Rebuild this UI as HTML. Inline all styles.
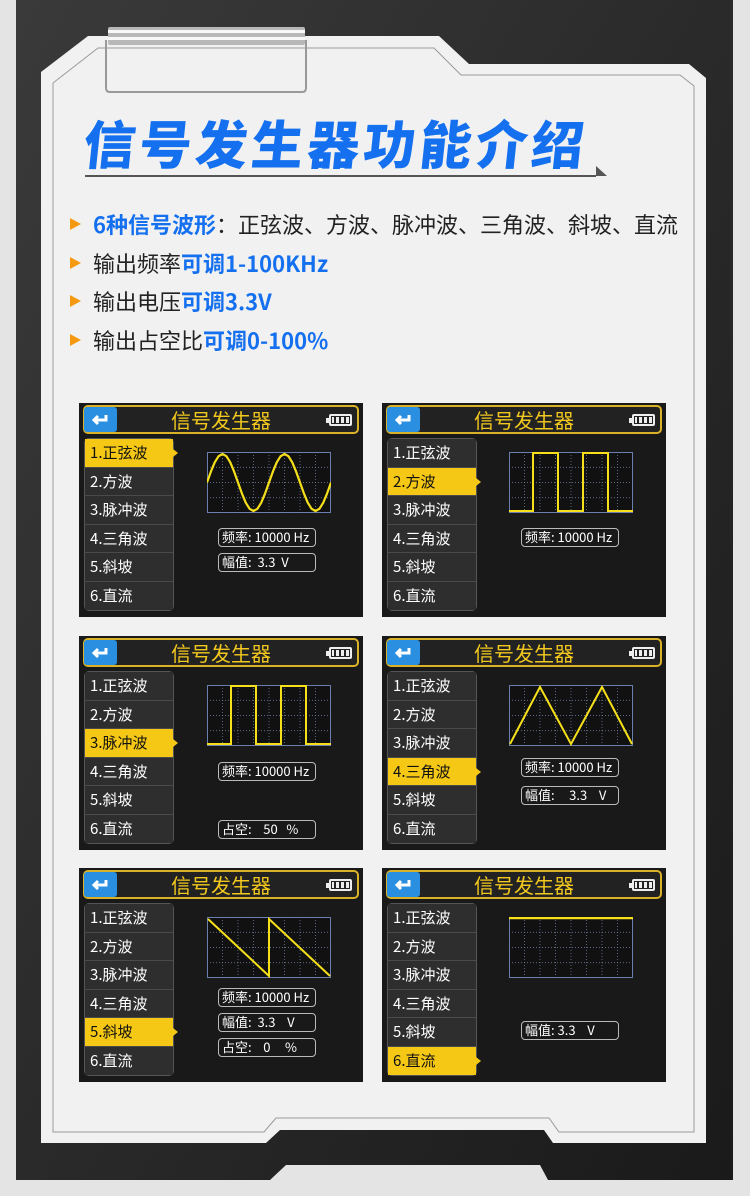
<!DOCTYPE html>
<html><head><meta charset="utf-8">
<style>
*{margin:0;padding:0;box-sizing:border-box}
body{width:750px;height:1196px;background:#e4e4e4;position:relative;overflow:hidden;font-family:"Liberation Sans","Noto Sans CJK SC",sans-serif}
.abs{position:absolute}
.panel{position:absolute;width:284px;height:214px;background:#191919;overflow:hidden}
.hdr{position:absolute;left:4px;top:2px;width:276px;height:29px;border:2px solid #d9b227;border-radius:5px;background:#222}
.back{position:absolute;left:5px;top:4px;width:33px;height:25px;background:#2a8fe0;border-radius:3px}
.ttl{position:absolute;left:0;right:0;top:2px;height:29px;text-align:center;color:#f2c81e;font-size:20px;line-height:29px;font-family:"Noto Sans CJK SC",sans-serif}
.bat{position:absolute;right:11px;top:11px;width:23px;height:12px;border:2px solid #eee;border-radius:2px;background:repeating-linear-gradient(90deg,#eee 0 3px,#222 3px 5px);background-clip:content-box;padding:1px}
.bat:after{content:"";position:absolute;left:-5px;top:2px;width:3px;height:5px;background:#eee}
.menu{position:absolute;left:5px;top:35px;width:90px;height:173px;border:1px solid #555;border-radius:5px;overflow:visible}
.it{height:28.5px;background:#2e2e2e;border-bottom:1px solid #4a4a4a;color:#fff;font-size:15px;line-height:28px;padding-left:5px;font-family:"Noto Sans CJK SC",sans-serif}
.it.s{background:#f5c816;color:#111;position:relative}
.it.s:after{content:"";position:absolute;right:-5px;top:10px;border-left:5px solid #f5c816;border-top:4px solid transparent;border-bottom:4px solid transparent}
.gr{position:absolute;left:128px;top:49px;width:124px;height:61px}
.box{position:absolute;left:139px;width:98px;height:19px;border:1.5px solid #bbb;border-radius:4px;color:#fff;font-size:13px;line-height:16px;padding-left:3px;white-space:pre;font-family:"Noto Sans CJK SC",sans-serif}
.bl{position:absolute;left:70px;font-size:22px;color:#222;white-space:nowrap;font-family:"Noto Sans CJK SC",sans-serif;line-height:30px}
.bl b{font-weight:bold;color:#1570f0}
.tri{display:inline-block;width:0;height:0;border-left:11px solid #f59a10;border-top:6px solid transparent;border-bottom:6px solid transparent;margin-right:12px;vertical-align:3px}
</style></head><body>
<svg class="abs" style="left:0;top:0" width="750" height="1196">
<defs><linearGradient id="dk" x1="0" y1="0" x2="1" y2="1"><stop offset="0" stop-color="#3a3a3a"/><stop offset="1" stop-color="#1a1a1a"/></linearGradient></defs>
<polygon points="16,0 733,0 733,1180 548,1180 540,1165 286,1165 270,1180 16,1180" fill="url(#dk)"/>
<polygon points="41,72 88,36 439,36 469,64 689,64 706,78 706,1143 553,1143 544,1130 280,1130 266,1143 41,1143" fill="#f1f1f1"/>
<polyline points="53,83 98,48 434,48 461,75 680,75 694,86 694,1132 559,1132 549,1118 276,1118 264,1132 53,1132 53,83" fill="none" stroke="#9a9a9a" stroke-width="1"/>
<rect x="108" y="27" width="197" height="18" rx="2" fill="#b8b8b8"/>
<rect x="108" y="30" width="197" height="3" fill="#f8f8f8"/>
<rect x="108" y="37" width="197" height="3" fill="#f8f8f8"/>
<path d="M106,40 L106,88 Q106,92 110,92 L302,92 Q306,92 306,88 L306,40" fill="none" stroke="#999" stroke-width="2"/>
<line x1="85" y1="176" x2="596" y2="176" stroke="#555" stroke-width="2"/>
<polygon points="596,166 607,176 596,176" fill="#555"/>
</svg>
<div class="abs" style="left:84px;top:110px;font-size:52px;color:#1570f0;letter-spacing:4px;line-height:64px;font-family:'Noto Sans CJK SC',sans-serif;font-weight:900;transform:skewX(-6deg);white-space:nowrap">信号发生器功能介绍</div>
<div class="bl" style="top:209px"><span class="tri"></span><b>6种信号波形</b>：正弦波、方波、脉冲波、三角波、斜坡、直流</div>
<div class="bl" style="top:248px"><span class="tri"></span>输出频率<b>可调1-100KHz</b></div>
<div class="bl" style="top:286px"><span class="tri"></span>输出电压<b>可调3.3V</b></div>
<div class="bl" style="top:325px"><span class="tri"></span>输出占空比<b>可调0-100%</b></div>

<!-- Panel 1 -->
<div class="panel" style="left:79px;top:403px">
<div class="hdr"></div><div class="back"><svg width="33" height="25"><path d="M22,8 v5 h-12 M14,9 l-4,4 4,4" stroke="#fff" stroke-width="3" fill="none"/></svg></div><div class="ttl">信号发生器</div><div class="bat"></div>
<div class="menu"><div class="it s">1.正弦波</div><div class="it">2.方波</div><div class="it">3.脉冲波</div><div class="it">4.三角波</div><div class="it">5.斜坡</div><div class="it" style="border:0">6.直流</div></div>
<svg class="gr" viewBox="0 0 124 61"><rect x=".5" y=".5" width="123" height="60" fill="#111" stroke="#6a7fae"/><g stroke="#7a88b0" stroke-dasharray="1 2" stroke-width=".7"><path d="M15.5,0v61M31,0v61M46.5,0v61M62,0v61M77.5,0v61M93,0v61M108.5,0v61M0,15.25h124M0,30.5h124M0,45.75h124"/></g><polyline points="0,30.5 3.9,19.6 7.75,10.35 11.6,4.2 15.5,2 19.4,4.2 23.25,10.35 27.1,19.6 31,30.5 34.9,41.4 38.75,50.65 42.6,56.8 46.5,59 50.4,56.8 54.25,50.65 58.1,41.4 62,30.5 65.9,19.6 69.75,10.35 73.6,4.2 77.5,2 81.4,4.2 85.25,10.35 89.1,19.6 93,30.5 96.9,41.4 100.75,50.65 104.6,56.8 108.5,59 112.4,56.8 116.25,50.65 120.1,41.4 124,30.5" fill="none" stroke="#f5e01a" stroke-width="2.2" stroke-linejoin="round"/></svg>
<div class="box" style="top:125px">频率: 10000 Hz</div><div class="box" style="top:150px">幅值:  3.3  V</div>
</div>

<!-- Panel 2 -->
<div class="panel" style="left:382px;top:403px">
<div class="hdr"></div><div class="back"><svg width="33" height="25"><path d="M22,8 v5 h-12 M14,9 l-4,4 4,4" stroke="#fff" stroke-width="3" fill="none"/></svg></div><div class="ttl">信号发生器</div><div class="bat"></div>
<div class="menu"><div class="it">1.正弦波</div><div class="it s">2.方波</div><div class="it">3.脉冲波</div><div class="it">4.三角波</div><div class="it">5.斜坡</div><div class="it" style="border:0">6.直流</div></div>
<svg class="gr" style="left:127px" viewBox="0 0 124 61"><rect x=".5" y=".5" width="123" height="60" fill="#111" stroke="#6a7fae"/><g stroke="#7a88b0" stroke-dasharray="1 2" stroke-width=".7"><path d="M15.5,0v61M31,0v61M46.5,0v61M62,0v61M77.5,0v61M93,0v61M108.5,0v61M0,15.25h124M0,30.5h124M0,45.75h124"/></g><path d="M0,59 H24 V1 H49 V59 H74 V1 H99 V59 H124" fill="none" stroke="#f5e01a" stroke-width="2"/></svg>
<div class="box" style="top:125px">频率: 10000 Hz</div>
</div>

<!-- Panel 3 -->
<div class="panel" style="left:79px;top:636px">
<div class="hdr"></div><div class="back"><svg width="33" height="25"><path d="M22,8 v5 h-12 M14,9 l-4,4 4,4" stroke="#fff" stroke-width="3" fill="none"/></svg></div><div class="ttl">信号发生器</div><div class="bat"></div>
<div class="menu"><div class="it">1.正弦波</div><div class="it">2.方波</div><div class="it s">3.脉冲波</div><div class="it">4.三角波</div><div class="it">5.斜坡</div><div class="it" style="border:0">6.直流</div></div>
<svg class="gr" viewBox="0 0 124 61"><rect x=".5" y=".5" width="123" height="60" fill="#111" stroke="#6a7fae"/><g stroke="#7a88b0" stroke-dasharray="1 2" stroke-width=".7"><path d="M15.5,0v61M31,0v61M46.5,0v61M62,0v61M77.5,0v61M93,0v61M108.5,0v61M0,15.25h124M0,30.5h124M0,45.75h124"/></g><path d="M0,59 H24 V1 H49 V59 H74 V1 H99 V59 H124" fill="none" stroke="#f5e01a" stroke-width="2"/></svg>
<div class="box" style="top:126px">频率: 10000 Hz</div><div class="box" style="top:184px">占空:    50   %</div>
</div>

<!-- Panel 4 -->
<div class="panel" style="left:382px;top:636px">
<div class="hdr"></div><div class="back"><svg width="33" height="25"><path d="M22,8 v5 h-12 M14,9 l-4,4 4,4" stroke="#fff" stroke-width="3" fill="none"/></svg></div><div class="ttl">信号发生器</div><div class="bat"></div>
<div class="menu"><div class="it">1.正弦波</div><div class="it">2.方波</div><div class="it">3.脉冲波</div><div class="it s">4.三角波</div><div class="it">5.斜坡</div><div class="it" style="border:0">6.直流</div></div>
<svg class="gr" style="left:127px" viewBox="0 0 124 61"><rect x=".5" y=".5" width="123" height="60" fill="#111" stroke="#6a7fae"/><g stroke="#7a88b0" stroke-dasharray="1 2" stroke-width=".7"><path d="M15.5,0v61M31,0v61M46.5,0v61M62,0v61M77.5,0v61M93,0v61M108.5,0v61M0,15.25h124M0,30.5h124M0,45.75h124"/></g><path d="M1,59 L31,2 L62,59 L93,2 L123,59" fill="none" stroke="#f5e01a" stroke-width="2"/></svg>
<div class="box" style="top:122px">频率: 10000 Hz</div><div class="box" style="top:150px">幅值:     3.3    V</div>
</div>

<!-- Panel 5 -->
<div class="panel" style="left:79px;top:868px">
<div class="hdr"></div><div class="back"><svg width="33" height="25"><path d="M22,8 v5 h-12 M14,9 l-4,4 4,4" stroke="#fff" stroke-width="3" fill="none"/></svg></div><div class="ttl">信号发生器</div><div class="bat"></div>
<div class="menu"><div class="it">1.正弦波</div><div class="it">2.方波</div><div class="it">3.脉冲波</div><div class="it">4.三角波</div><div class="it s">5.斜坡</div><div class="it" style="border:0">6.直流</div></div>
<svg class="gr" viewBox="0 0 124 61"><rect x=".5" y=".5" width="123" height="60" fill="#111" stroke="#6a7fae"/><g stroke="#7a88b0" stroke-dasharray="1 2" stroke-width=".7"><path d="M15.5,0v61M31,0v61M46.5,0v61M62,0v61M77.5,0v61M93,0v61M108.5,0v61M0,15.25h124M0,30.5h124M0,45.75h124"/></g><path d="M1,2 L62,59 V2 L123,59" fill="none" stroke="#f5e01a" stroke-width="2"/></svg>
<div class="box" style="top:120px">频率: 10000 Hz</div><div class="box" style="top:145px">幅值:  3.3    V</div><div class="box" style="top:170px">占空:    0     %</div>
</div>

<!-- Panel 6 -->
<div class="panel" style="left:382px;top:868px">
<div class="hdr"></div><div class="back"><svg width="33" height="25"><path d="M22,8 v5 h-12 M14,9 l-4,4 4,4" stroke="#fff" stroke-width="3" fill="none"/></svg></div><div class="ttl">信号发生器</div><div class="bat"></div>
<div class="menu"><div class="it">1.正弦波</div><div class="it">2.方波</div><div class="it">3.脉冲波</div><div class="it">4.三角波</div><div class="it">5.斜坡</div><div class="it s" style="border:0">6.直流</div></div>
<svg class="gr" style="left:127px" viewBox="0 0 124 61"><rect x=".5" y=".5" width="123" height="60" fill="#111" stroke="#6a7fae"/><g stroke="#7a88b0" stroke-dasharray="1 2" stroke-width=".7"><path d="M15.5,0v61M31,0v61M46.5,0v61M62,0v61M77.5,0v61M93,0v61M108.5,0v61M0,15.25h124M0,30.5h124M0,45.75h124"/></g><path d="M0,1 H124" fill="none" stroke="#f5e01a" stroke-width="2.4"/></svg>
<div class="box" style="top:153px">幅值: 3.3    V</div>
</div>
</body></html>
